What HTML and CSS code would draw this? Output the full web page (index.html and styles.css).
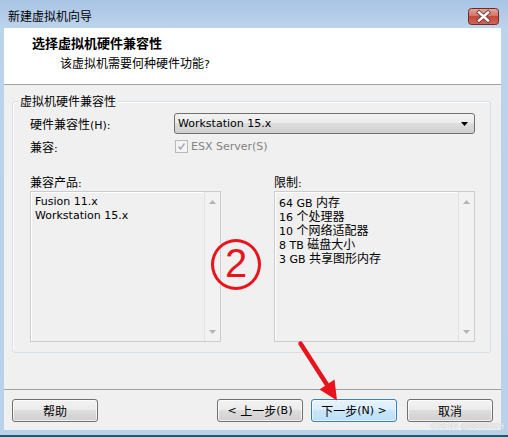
FILE: index.html
```html
<!DOCTYPE html>
<html lang="zh-CN">
<head>
<meta charset="utf-8">
<title>新建虚拟机向导</title>
<link rel="stylesheet" href="styles.css">
</head>
<body>
<div class="window">
  <div class="titlebar">
    <span class="title">新建虚拟机向导</span>
    <div class="close">
      <svg width="31" height="17" viewBox="0 0 31 17">
        <defs>
          <linearGradient id="cg" x1="0" y1="0" x2="0" y2="1">
            <stop offset="0" stop-color="#e8a79d"/>
            <stop offset="0.45" stop-color="#d27366"/>
            <stop offset="0.5" stop-color="#c4493b"/>
            <stop offset="1" stop-color="#d0675a"/>
          </linearGradient>
        </defs>
        <rect x="0.5" y="0.5" width="30" height="16" rx="3" fill="url(#cg)" stroke="#6e2a24"/>
        <path d="M11 4.5 L20 12.5 M20 4.5 L11 12.5" stroke="#6b3b36" stroke-width="4.2" stroke-linecap="square"/>
        <path d="M11 4.5 L20 12.5 M20 4.5 L11 12.5" stroke="#ffffff" stroke-width="2.4" stroke-linecap="square"/>
      </svg>
    </div>
  </div>
  <div class="client">
    <div class="header">
      <div class="h-title">选择虚拟机硬件兼容性</div>
      <div class="h-sub">该虚拟机需要何种硬件功能<span class="en">?</span></div>
    </div>
    <div class="main">
      <div class="group">
        <div class="group-title">虚拟机硬件兼容性</div>
        <div class="row row1">
          <span class="lbl">硬件兼容性<span class="en">(H):</span></span>
          <div class="combo">
            <span class="en">Workstation 15.x</span>
            <svg width="7" height="4" viewBox="0 0 7 4"><path d="M0 0 H7 L3.5 4 Z" fill="#000"/></svg>
          </div>
        </div>
        <div class="row row2">
          <span class="lbl">兼容<span class="en">:</span></span>
          <div class="check">
            <span class="box">
              <svg width="11" height="11" viewBox="0 0 11 11"><path d="M2.5 5.5 L4.5 8 L8.5 2.5" fill="none" stroke="#a8a8a8" stroke-width="1.4"/></svg>
            </span>
            <span class="en dis">ESX Server(S)</span>
          </div>
        </div>
        <div class="lists">
          <div class="col">
            <div class="lbl2">兼容产品<span class="en">:</span></div>
            <div class="listbox">
              <ul class="items">
                <li class="en">Fusion 11.x</li>
                <li class="en">Workstation 15.x</li>
              </ul>
              <div class="sb">
                <svg width="7" height="4" viewBox="0 0 7 4"><path d="M0 4 H7 L3.5 0 Z" fill="#b4b4b4"/></svg>
                <svg width="7" height="4" viewBox="0 0 7 4"><path d="M0 0 H7 L3.5 4 Z" fill="#b4b4b4"/></svg>
              </div>
            </div>
          </div>
          <div class="col">
            <div class="lbl2">限制<span class="en">:</span></div>
            <div class="listbox">
              <ul class="items">
                <li><span class="en">64 GB </span>内存</li>
                <li><span class="en">16 </span>个处理器</li>
                <li><span class="en">10 </span>个网络适配器</li>
                <li><span class="en">8 TB </span>磁盘大小</li>
                <li><span class="en">3 GB </span>共享图形内存</li>
              </ul>
              <div class="sb">
                <svg width="7" height="4" viewBox="0 0 7 4"><path d="M0 4 H7 L3.5 0 Z" fill="#b4b4b4"/></svg>
                <svg width="7" height="4" viewBox="0 0 7 4"><path d="M0 0 H7 L3.5 4 Z" fill="#b4b4b4"/></svg>
              </div>
            </div>
          </div>
        </div>
      </div>
    </div>
    <div class="footer">
      <div class="btn">帮助</div>
      <div class="spacer"></div>
      <div class="btn"><span class="en">&lt;&nbsp;</span>上一步<span class="en">(B)</span></div>
      <div class="btn next">下一步<span class="en">(N) &gt;</span></div>
      <div class="btn cancel">取消</div>
    </div>
  </div>

  <div class="anno-circle">2</div>
  <svg class="anno-arrow" width="508" height="437" viewBox="0 0 508 437">
    <path d="M300.5 343.5 L327.5 385.5" stroke="#e8141c" stroke-width="4.5" stroke-linecap="round"/>
    <path d="M337 400.5 L319.5 389.5 L334.5 379.5 Z" fill="#e8141c"/>
  </svg>
  <div class="watermark">CSDN @8888XH</div>
</div>
</body>
</html>
```

FILE: styles.css
```css
html, body {
  margin: 0;
  padding: 0;
}

body {
  width: 508px;
  height: 437px;
  overflow: hidden;
  background: #b9d1ea;
  font-family: "Noto Sans CJK SC", sans-serif;
  font-size: 12px;
  color: #000;
}

.en {
  font-family: "DejaVu Sans", "Noto Sans CJK SC", sans-serif;
  font-size: 11px;
}

.window {
  position: relative;
  width: 508px;
  height: 437px;
  box-sizing: border-box;
  padding: 0 7px 0 4px;
  background: linear-gradient(#a9c4e4 0, #bcd3ec 28px, #b9d1ea 100%);
  box-shadow: inset 0 -2px 0 #2a5566;
}

.titlebar {
  height: 28px;
  box-sizing: border-box;
  margin: 0 -7px 0 -4px;
  padding: 4px 9px 0 8px;
  display: flex;
  align-items: center;
  justify-content: space-between;
}

.title {
  line-height: 24px;
  color: #000;
}

.close {
  width: 31px;
  height: 17px;
  display: flex;
}

.client {
  height: 402px;
  display: flex;
  flex-direction: column;
  background: #f0f0f0;
}

.header {
  height: 57px;
  box-sizing: border-box;
  background: #fff;
  border-bottom: 1px solid #a0a0a0;
  padding-top: 7px;
}

.h-title {
  font-weight: bold;
  font-size: 13px;
  line-height: 16px;
  padding-left: 28px;
}

.h-sub {
  line-height: 16px;
  margin-top: 4px;
  padding-left: 56px;
}

.main {
  flex: 1;
  box-sizing: border-box;
  padding: 16px 10px 0 8px;
}

.group {
  height: 252px;
  box-sizing: border-box;
  border: 1px solid #d5dfe5;
  border-radius: 3px;
  box-shadow: inset 1px 1px 0 #ffffff;
  padding: 0 15px 0 17px;
}

.group-title {
  margin: -9px 0 0 -12px;
  padding: 0 2px;
  width: max-content;
  background: #f0f0f0;
  line-height: 16px;
}

.row {
  display: flex;
  align-items: center;
  height: 21px;
}

.row1 {
  margin-top: 4px;
}

.row2 {
  margin-top: 2px;
}

.lbl {
  width: 144px;
  flex: none;
}

.combo {
  width: 301px;
  height: 21px;
  box-sizing: border-box;
  border: 1px solid #707070;
  border-radius: 3px;
  background: linear-gradient(#f2f2f2, #ebebeb 50%, #dddddd 50%, #cfcfcf);
  display: flex;
  align-items: center;
  justify-content: space-between;
  padding: 0 6px 0 3px;
}

.check {
  display: flex;
  align-items: center;
  gap: 3px;
  margin-left: 1px;
}

.box {
  width: 13px;
  height: 13px;
  box-sizing: border-box;
  border: 1px solid #b8b8b8;
  background: #f4f4f4;
  display: flex;
}

.dis {
  color: #838383;
}

.lists {
  display: grid;
  grid-template-columns: 191px 201px;
  column-gap: 53px;
  margin-top: 17px;
}

.lbl2 {
  line-height: 15px;
}

.listbox {
  height: 151px;
  box-sizing: border-box;
  border: 1px solid #c9cdd2;
  box-shadow: inset 1px 1px 0 #ffffff;
  background: #f0f0f0;
  display: flex;
}

.items {
  flex: 1;
  margin: 0;
  padding: 3px 0 0 4px;
  list-style: none;
  line-height: 14px;
}

.items li {
  height: 14px;
  white-space: nowrap;
}

.sb {
  width: 16px;
  flex: none;
  border-left: 1px solid #e2e2e2;
  background: #f2f2f2;
  display: flex;
  flex-direction: column;
  justify-content: space-between;
  align-items: center;
  padding: 8px 0 7px;
  box-sizing: border-box;
}

.footer {
  height: 41px;
  box-sizing: border-box;
  border-top: 1px solid #a0a0a0;
  padding: 9px 8px 8px 8px;
  display: flex;
}

.spacer {
  flex: 1;
}

.btn {
  width: 86px;
  height: 23px;
  box-sizing: border-box;
  border: 1px solid #707070;
  border-radius: 3px;
  background: linear-gradient(#f2f2f2, #ebebeb 50%, #dddddd 50%, #cfcfcf);
  box-shadow: inset 0 0 0 1px rgba(255, 255, 255, 0.7);
  display: flex;
  align-items: center;
  justify-content: center;
  line-height: 16px;
}

.next {
  margin-left: 8px;
  border-color: #3c7fb1;
  background: linear-gradient(#e5f3fd, #d9eefc 50%, #c9e6fa 50%, #bcdff6);
  box-shadow: inset 0 0 0 1px rgba(255, 255, 255, 0.6);
}

.cancel {
  margin-left: 10px;
}

.anno-circle {
  position: absolute;
  left: 211px;
  top: 239px;
  width: 50px;
  height: 51px;
  box-sizing: border-box;
  border: 3px solid #e8141c;
  border-radius: 50%;
  color: #e8141c;
  font-family: "Liberation Sans", sans-serif;
  font-size: 40px;
  line-height: 40px;
  display: flex;
  align-items: center;
  justify-content: center;
  padding-bottom: 3px;
}

.anno-arrow {
  position: absolute;
  left: 0;
  top: 0;
  pointer-events: none;
}

.watermark {
  position: absolute;
  right: 4px;
  bottom: 6px;
  font-family: "Liberation Sans", sans-serif;
  font-weight: bold;
  font-size: 9.5px;
  line-height: 11px;
  color: rgba(255, 255, 255, 0.75);
  text-shadow: 0 0 1px rgba(120, 130, 140, 0.6);
}
```
